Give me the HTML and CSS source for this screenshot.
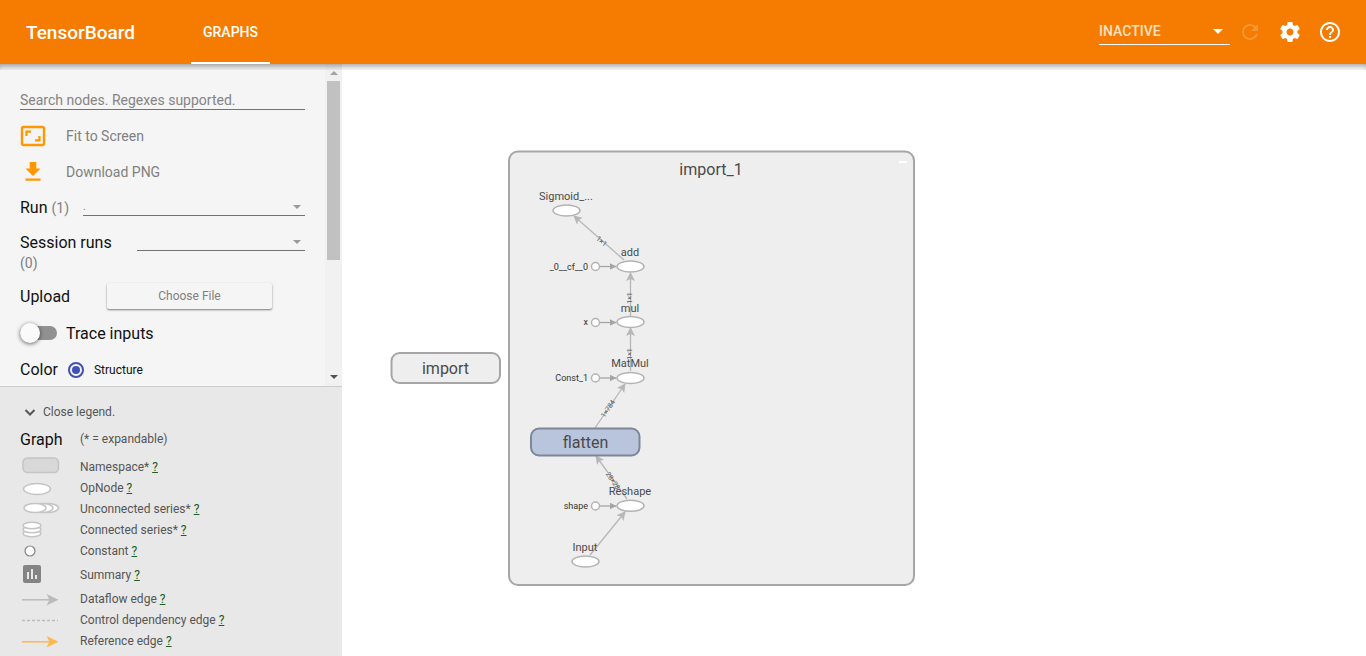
FILE: index.html
```html
<!DOCTYPE html>
<html lang="en">
<head>
<meta charset="utf-8">
<meta name="viewport" content="width=device-width, initial-scale=1">
<title>TensorBoard</title>
<link rel="stylesheet" href="styles.css">
</head>
<body>
<header class="toolbar">
  <h1 class="brand">TensorBoard</h1>
  <nav class="tabs"><a class="tab" href="#graphs">GRAPHS</a></nav>
  <div class="actions">
    <div class="picker picker-inactive">
      <select aria-label="Inactive dashboards"><option>INACTIVE</option></select>
      <svg class="caret" width="10" height="5" viewBox="0 0 10 5"><path d="M0 0h10L5 5z"/></svg>
    </div>
    <button class="icon-button" aria-label="Reload" disabled><svg width="24" height="24" viewBox="0 0 24 24"><path d="M17.65 6.35C16.2 4.9 14.21 4 12 4c-4.42 0-7.99 3.58-7.99 8s3.57 8 7.99 8c3.73 0 6.84-2.55 7.73-6h-2.08c-.82 2.33-3.04 4-5.65 4-3.31 0-6-2.69-6-6s2.69-6 6-6c1.66 0 3.14.69 4.22 1.78L13 11h7V4l-2.35 2.35z"/></svg></button>
    <button class="icon-button" aria-label="Settings"><svg width="24" height="24" viewBox="0 0 24 24"><path d="M19.43 12.98c.04-.32.07-.64.07-.98s-.03-.66-.07-.98l2.11-1.65c.19-.15.24-.42.12-.64l-2-3.46c-.12-.22-.39-.3-.61-.22l-2.49 1c-.52-.4-1.08-.73-1.69-.98l-.38-2.65C14.46 2.18 14.25 2 14 2h-4c-.25 0-.46.18-.49.42l-.38 2.65c-.61.25-1.17.59-1.69.98l-2.49-1c-.23-.09-.49 0-.61.22l-2 3.46c-.13.22-.07.49.12.64l2.11 1.65c-.04.32-.07.65-.07.98s.03.66.07.98l-2.11 1.65c-.19.15-.24.42-.12.64l2 3.46c.12.22.39.3.61.22l2.49-1c.52.4 1.08.73 1.69.98l.38 2.65c.03.24.24.42.49.42h4c.25 0 .46-.18.49-.42l.38-2.65c.61-.25 1.17-.59 1.69-.98l2.49 1c.23.09.49 0 .61-.22l2-3.46c.12-.22.07-.49-.12-.64l-2.11-1.65zM12 15.5c-1.93 0-3.5-1.57-3.5-3.5s1.57-3.5 3.5-3.5 3.5 1.57 3.5 3.5-1.57 3.5-3.5 3.5z"/></svg></button>
    <button class="icon-button" aria-label="Help"><svg width="24" height="24" viewBox="0 0 24 24"><path d="M11 18h2v-2h-2v2zm1-16C6.48 2 2 6.48 2 12s4.48 10 10 10 10-4.48 10-10S17.52 2 12 2zm0 18c-4.41 0-8-3.59-8-8s3.59-8 8-8 8 3.59 8 8-3.59 8-8 8zm0-14c-2.21 0-4 1.79-4 4h2c0-1.1.9-2 2-2s2 .9 2 2c0 2-3 1.75-3 5h2c0-2.25 3-2.5 3-5 0-2.21-1.79-4-4-4z"/></svg></button>
  </div>
</header>
<main class="workspace">
  <aside class="sidebar">
    <div class="controls">
      <div class="control-list">
        <input class="search" type="text" aria-label="Search nodes" placeholder="Search nodes. Regexes supported.">
        <button class="command"><svg width="26" height="26" viewBox="0 0 26 26"><rect x="2" y="4" width="22" height="18" rx="1.500" fill="none" stroke="#ff9800" stroke-width="2.400"/><path d="M6.500 13V8.700H11M19.500 13V17.300H15" fill="none" stroke="#ff9800" stroke-width="2.200"/></svg><span>Fit to Screen</span></button>
        <button class="command"><svg width="26" height="26" viewBox="0 0 26 26"><path d="M20.500 9.500h-4.200V3h-6.600v6.500H5.500L13 17zM5.500 19.500v2.200h15v-2.200z" fill="#ff9800"/></svg><span>Download PNG</span></button>
        <div class="field run">
          <label for="run">Run <small>(1)</small></label>
          <div class="picker"><select id="run"><option>.</option></select><svg class="caret" width="8" height="4" viewBox="0 0 8 4"><path d="M0 0h8L4 4z"/></svg></div>
        </div>
        <div class="field session">
          <label for="session">Session runs <small>(0)</small></label>
          <div class="picker"><select id="session"><option></option></select><svg class="caret" width="8" height="4" viewBox="0 0 8 4"><path d="M0 0h8L4 4z"/></svg></div>
        </div>
        <div class="field upload"><span id="upload-label">Upload</span><button class="file-button" aria-describedby="upload-label">Choose File</button></div>
        <label class="field trace"><input class="toggle" type="checkbox"><span>Trace inputs</span></label>
        <div class="field color"><span>Color</span><label class="choice"><input class="radio" type="radio" name="color" checked><span>Structure</span></label></div>
      </div>
      <div class="scrollbar" aria-hidden="true">
        <svg width="8" height="4" viewBox="0 0 8 4"><path d="M0 4h8L4 0z" fill="#a3a3a3"/></svg>
        <div class="track"><div class="thumb"></div></div>
        <svg width="8" height="4" viewBox="0 0 8 4"><path d="M0 0h8L4 4z" fill="#505050"/></svg>
      </div>
    </div>
    <section class="legend">
      <button class="legend-toggle"><svg width="20" height="20" viewBox="0 0 20 20"><path d="M5.500 8L10 12.500 14.500 8" fill="none" stroke="#555" stroke-width="2"/></svg><span>Close legend.</span></button>
      <div class="legend-head"><h2>Graph</h2><span>(* = expandable)</span></div>
      <ul class="legend-list">
        <li><svg width="60" height="21"><rect x="3" y="1" width="35.500" height="14.500" rx="4.500" fill="#d8d8d8" stroke="#c4c4c4" stroke-width="1.500"/></svg><span>Namespace* <a href="#namespace">?</a></span></li>
        <li><svg width="60" height="21"><ellipse class="shape" cx="17" cy="11" rx="13.500" ry="5.500"/></svg><span>OpNode <a href="#opnode">?</a></span></li>
        <li><svg width="60" height="21"><g class="shape"><ellipse cx="27.500" cy="9" rx="11" ry="4.500"/><ellipse cx="22" cy="9" rx="11" ry="4.500"/><ellipse cx="15" cy="9" rx="11" ry="4.500"/></g></svg><span>Unconnected series* <a href="#unconnected">?</a></span></li>
        <li><svg width="60" height="21"><g class="shape"><ellipse cx="12" cy="13.500" rx="9" ry="3.200"/><ellipse cx="12" cy="9.500" rx="9" ry="3.200"/><ellipse cx="12" cy="5.500" rx="9" ry="3.200"/></g></svg><span>Connected series* <a href="#connected">?</a></span></li>
        <li><svg width="60" height="21"><circle cx="10" cy="10" r="5" fill="#fff" stroke="#848484" stroke-width="1.200"/></svg><span>Constant <a href="#constant">?</a></span></li>
        <li class="tall"><svg width="60" height="27"><path fill="#848484" d="M19 3H5c-1.100 0-2 .9-2 2v14c0 1.100.9 2 2 2h14c1.100 0 2-.9 2-2V5c0-1.100-.9-2-2-2zM9 17H7v-7h2v7zm4 0h-2V7h2v10zm4 0h-2v-4h2v4z"/></svg><span>Summary <a href="#summary">?</a></span></li>
        <li><svg width="60" height="21"><path d="M2 10.800H30" stroke="#bbb" stroke-width="1.500"/><path d="M38.500 10.800L26.500 16.500 29.500 10.800 26.500 5z" fill="#bbb"/></svg><span>Dataflow edge <a href="#dataflow">?</a></span></li>
        <li><svg width="60" height="21"><path d="M2 10.500H38" stroke="#bbb" stroke-width="1.300" stroke-dasharray="3 2"/></svg><span>Control dependency edge <a href="#control">?</a></span></li>
        <li><svg width="60" height="21"><path d="M2 10.800H30" stroke="#ffb74d" stroke-width="1.500"/><path d="M38.500 10.800L26.500 16.500 29.500 10.800 26.500 5z" fill="#ffb74d"/></svg><span>Reference edge <a href="#reference">?</a></span></li>
      </ul>
    </section>
  </aside>
  <section class="canvas" aria-label="Graph">
    <svg class="graph">
      <defs>
        <marker id="arrow" markerUnits="userSpaceOnUse" markerWidth="9" markerHeight="9" refX="8" refY="4.500" orient="auto"><path d="M0 0L9 4.500 0 9 2 4.500z" fill="#b7b7b7"/></marker>
        <marker id="arrow-small" markerUnits="userSpaceOnUse" markerWidth="7" markerHeight="7" refX="6.500" refY="3.500" orient="auto"><path d="M0 0L7 3.500 0 7z" fill="#a5a5a5"/></marker>
      </defs>
      <g transform="translate(-342 -64)">
        <rect class="group" x="391.500" y="353" width="108.500" height="30" rx="8"/>
        <text class="title" x="445.500" y="374">import</text>
        <rect class="group" x="509" y="151.500" width="405" height="433.500" rx="9"/>
        <text class="title" x="711" y="175">import_1</text>
        <path d="M899 162h8" stroke="#fff" stroke-width="2"/>
        <g class="edges">
          <path d="M624 260L574 216"/>
          <path d="M630.500 316V273"/>
          <path d="M630.500 371V328"/>
          <path d="M595 428L625 384"/>
          <path d="M627 499L596 456"/>
          <path d="M590 555L625 512"/>
        </g>
        <g class="inputs">
          <path d="M600 266.500H616"/>
          <path d="M600 322.500H616"/>
          <path d="M600 378H616"/>
          <path d="M600 506H616"/>
        </g>
        <g class="nodes">
          <ellipse cx="566.500" cy="210.500" rx="13.500" ry="5.500"/>
          <ellipse cx="630.500" cy="266.500" rx="13.500" ry="5.500"/>
          <ellipse cx="630.500" cy="322" rx="13.500" ry="5.500"/>
          <ellipse cx="630.500" cy="378" rx="13.500" ry="5.500"/>
          <ellipse cx="630.500" cy="505.800" rx="13.500" ry="5.500"/>
          <ellipse cx="585.500" cy="561.500" rx="13.500" ry="5.500"/>
          <circle cx="595.500" cy="266.500" r="4"/>
          <circle cx="595.500" cy="322.500" r="4"/>
          <circle cx="595.500" cy="378" r="4"/>
          <circle cx="595.500" cy="506" r="4"/>
        </g>
        <rect class="cluster" x="531" y="428.500" width="108.500" height="27" rx="8"/>
        <text class="title" x="585.500" y="448">flatten</text>
        <g class="shapes">
          <text transform="translate(600 243) rotate(41)">1×1</text>
          <text transform="translate(632 298) rotate(-90)">1×1</text>
          <text transform="translate(632 354) rotate(-90)">1×1</text>
          <text transform="translate(610 410) rotate(-56)">1×784</text>
          <text transform="translate(611 482) rotate(55)">28×28</text>
        </g>
        <g class="names">
          <text x="566" y="200">Sigmoid_...</text>
          <text x="630" y="256">add</text>
          <text x="630" y="312">mul</text>
          <text x="630" y="367">MatMul</text>
          <text x="630" y="495">Reshape</text>
          <text x="585" y="551">Input</text>
        </g>
        <g class="constants">
          <text x="588" y="270">_0__cf__0</text>
          <text x="588" y="325">x</text>
          <text x="588" y="381">Const_1</text>
          <text x="588" y="509">shape</text>
        </g>
      </g>
    </svg>
  </section>
</main>
</body>
</html>
```
FILE: styles.css
```css
* { box-sizing: border-box; }
html, body { height: 100%; }
body {
  margin: 0;
  display: flex;
  flex-direction: column;
  overflow: hidden;
  font-family: Roboto, "Liberation Sans", sans-serif;
  font-size: 16px;
  color: #212121;
}
button, input, select { font: inherit; color: inherit; }
button { border: 0; padding: 0; background: none; text-align: left; cursor: pointer; }

.toolbar {
  flex: none;
  height: 64px;
  display: flex;
  align-items: center;
  padding: 0 24px 0 26px;
  background: #f57c00;
  color: #fff;
}
.brand { margin: 0; width: 165px; font-size: 19px; font-weight: 500; }
.tabs { align-self: stretch; display: flex; }
.tab {
  display: flex;
  align-items: center;
  padding: 2px 12px 0;
  border-bottom: 2px solid #fff;
  color: #fff;
  font-size: 14px;
  font-weight: 500;
  text-decoration: none;
}
.actions { margin-left: auto; display: flex; align-items: center; gap: 16px; }
.icon-button { display: flex; color: #fff; }
.icon-button svg { fill: currentColor; }
.icon-button:disabled { opacity: .2; }

.picker { display: grid; align-items: center; border-bottom: 1px solid #737373; }
.picker select {
  grid-area: 1 / 1;
  width: 100%;
  height: 16px;
  border: 0;
  padding: 0;
  background: none;
  appearance: none;
  font-size: 12px;
  outline: none;
}
.picker .caret { grid-area: 1 / 1; justify-self: end; margin-right: 4px; fill: #9a9a9a; pointer-events: none; }
.picker-inactive { width: 131px; margin-right: -8px; border-color: #fff; }
.picker-inactive select { height: 24px; padding-bottom: 2px; font-size: 14px; font-weight: 500; color: #ffe0c2; }
.picker-inactive .caret { margin-right: 7px; fill: #fff; }

.workspace { flex: 1; min-height: 0; display: flex; position: relative; }
.workspace::before {
  content: "";
  position: absolute;
  inset: 0 0 auto;
  height: 6px;
  box-shadow: inset 0 5px 6px -3px rgba(0, 0, 0, .4);
  pointer-events: none;
  z-index: 1;
}
.sidebar { flex: none; width: 342px; display: flex; flex-direction: column; background: #f5f5f5; }
.controls { flex: 1; min-height: 0; display: flex; overflow: hidden; }
.control-list { flex: 1; display: flex; flex-direction: column; padding: 26px 20px 0; }
.control-list > * { flex: none; }
.search {
  height: 20px;
  margin-bottom: 8px;
  border: 0;
  border-bottom: 1px solid #737373;
  padding: 0;
  background: none;
  font-size: 14px;
  outline: none;
}
.search::placeholder { color: #848484; opacity: 1; }
.command { height: 36px; display: flex; align-items: center; gap: 20px; color: #808080; font-size: 14px; }
.field { display: flex; align-items: center; color: #111; }
.field small { font-size: 14px; color: #808080; }
.run { height: 34px; gap: 14px; }
.run .picker { flex: 1; }
.run select { font-size: 10px; color: #777; }
.session { height: 48px; align-items: flex-start; padding-top: 9px; gap: 17px; line-height: 20px; }
.session label { width: 100px; }
.session .picker { flex: 1; margin-top: 1px; }
.upload { height: 48px; }
.upload span { width: 87px; }
.file-button {
  width: 165px;
  height: 26px;
  border-radius: 2px;
  background: #f5f5f5;
  box-shadow: 0 1px 2px rgba(0, 0, 0, .5);
  color: #808080;
  font-size: 12px;
  text-align: center;
}
.trace { height: 26px; gap: 9px; }
.toggle {
  appearance: none;
  flex: none;
  width: 37px;
  height: 14px;
  margin: 0;
  border-radius: 7px;
  background: #919191;
  display: flex;
  align-items: center;
}
.toggle::before {
  content: "";
  flex: none;
  width: 20px;
  height: 20px;
  border-radius: 50%;
  background: #fafafa;
  box-shadow: 0 1px 4px rgba(0, 0, 0, .6);
}
.color { height: 47px; gap: 10px; }
.choice { display: flex; align-items: center; gap: 10px; font-size: 12px; }
.radio {
  appearance: none;
  width: 16px;
  height: 16px;
  margin: 0;
  border: 2px solid #3f51b5;
  border-radius: 50%;
  padding: 2px;
  background: #3f51b5 content-box;
}
.scrollbar {
  flex: none;
  width: 17px;
  display: flex;
  flex-direction: column;
  align-items: center;
  gap: 6px;
  padding: 7px 0;
  background: #f1f1f1;
}
.track { flex: 1; }
.thumb { width: 13px; height: 62%; background: #c1c1c1; }

.legend { flex: none; padding: 15px 20px 4px; border-top: 1px solid #ccc; background: #e8e8e8; color: #555; font-size: 12px; }
.legend-toggle { height: 20px; display: flex; align-items: center; gap: 3px; }
.legend-head { height: 35px; display: flex; align-items: center; }
.legend-head h2 { width: 60px; margin: 0; font-size: 16px; font-weight: 400; color: #111; }
.legend-head span, .legend-list span { padding-bottom: 2px; }
.legend-list { margin: 0; padding: 0; list-style: none; }
.legend-list li { height: 21px; display: flex; align-items: center; }
.legend-list .tall { height: 27px; }
.legend-list a { color: #1b5e20; }
.shape { fill: #fff; stroke: #c4c4c4; stroke-width: 1.5px; }

.canvas { flex: 1; min-width: 0; background: #fff; }
.graph { display: block; width: 100%; height: 100%; }
.group { fill: #eee; stroke: #a6a6a6; stroke-width: 2px; }
.cluster { fill: #b9c4dd; stroke: #7e8798; stroke-width: 2px; }
.title { font-size: 16px; fill: #4a4a4a; text-anchor: middle; }
.edges path { fill: none; stroke: #b7b7b7; stroke-width: 1.3px; marker-end: url(#arrow); }
.inputs path { fill: none; stroke: #a5a5a5; stroke-width: 1.3px; marker-end: url(#arrow-small); }
.nodes { fill: #fff; stroke: #b3b3b3; stroke-width: 1.5px; }
.shapes { font-size: 7px; fill: #555; text-anchor: middle; }
.names { font-size: 11px; fill: #4a4a4a; text-anchor: middle; }
.constants { font-size: 9px; fill: #333; text-anchor: end; }
```
